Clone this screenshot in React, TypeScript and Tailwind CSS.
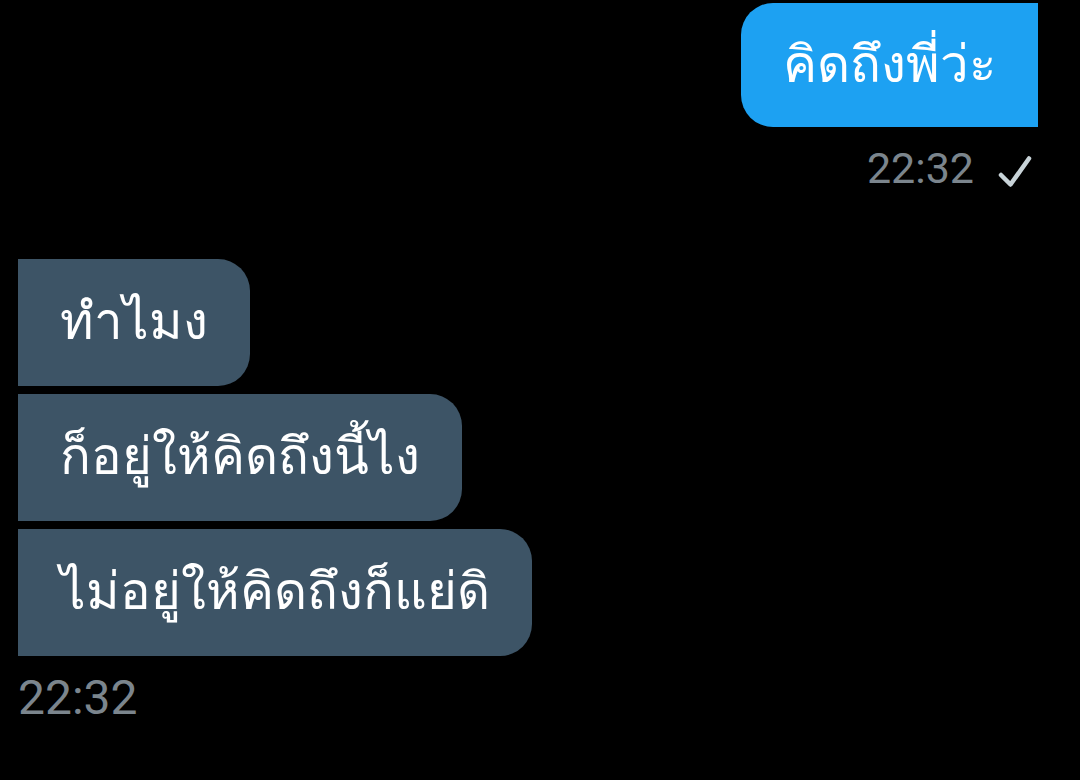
const incoming = ["ทำไมง", "ก็อยู่ให้คิดถึงนี้ไง", "ไม่อยู่ให้คิดถึงก็แย่ดิ"];

export default function App() {
  return (
    <div className="w-[1080px] h-[780px] overflow-hidden bg-black flex flex-col font-['Roboto','Noto_Sans',sans-serif]">
      <div className="flex flex-col items-end pr-[42px] pt-[3px]">
        <div className="h-[124px] px-[42px] flex items-center rounded-l-[32px] bg-[#1da1f2] text-white text-[51px]">
          คิดถึงพี่ว่ะ
        </div>
        <div className="flex items-center gap-[24px] mt-[20px] pr-[6px] text-[43px] leading-none text-[#7b858d]">
          <span>22:32</span>
          <svg width="34" height="32" viewBox="0 0 34 32" fill="none" className="mt-[4px]">
            <path d="M3 20l9.5 9.5L31 3.5" stroke="#c8d3d8" strokeWidth="4.5" strokeLinecap="round" strokeLinejoin="round" />
          </svg>
        </div>
      </div>
      <div className="flex flex-col items-start gap-[8px] pl-[18px] mt-[69px]">
        {incoming.map((t) => (
          <div key={t} className="h-[127px] px-[42px] flex items-center rounded-r-[32px] bg-[#3d5466] text-white text-[51px]">
            {t}
          </div>
        ))}
        <div className="mt-[10px] text-[48px] leading-none text-[#7b858d]">22:32</div>
      </div>
    </div>
  );
}
